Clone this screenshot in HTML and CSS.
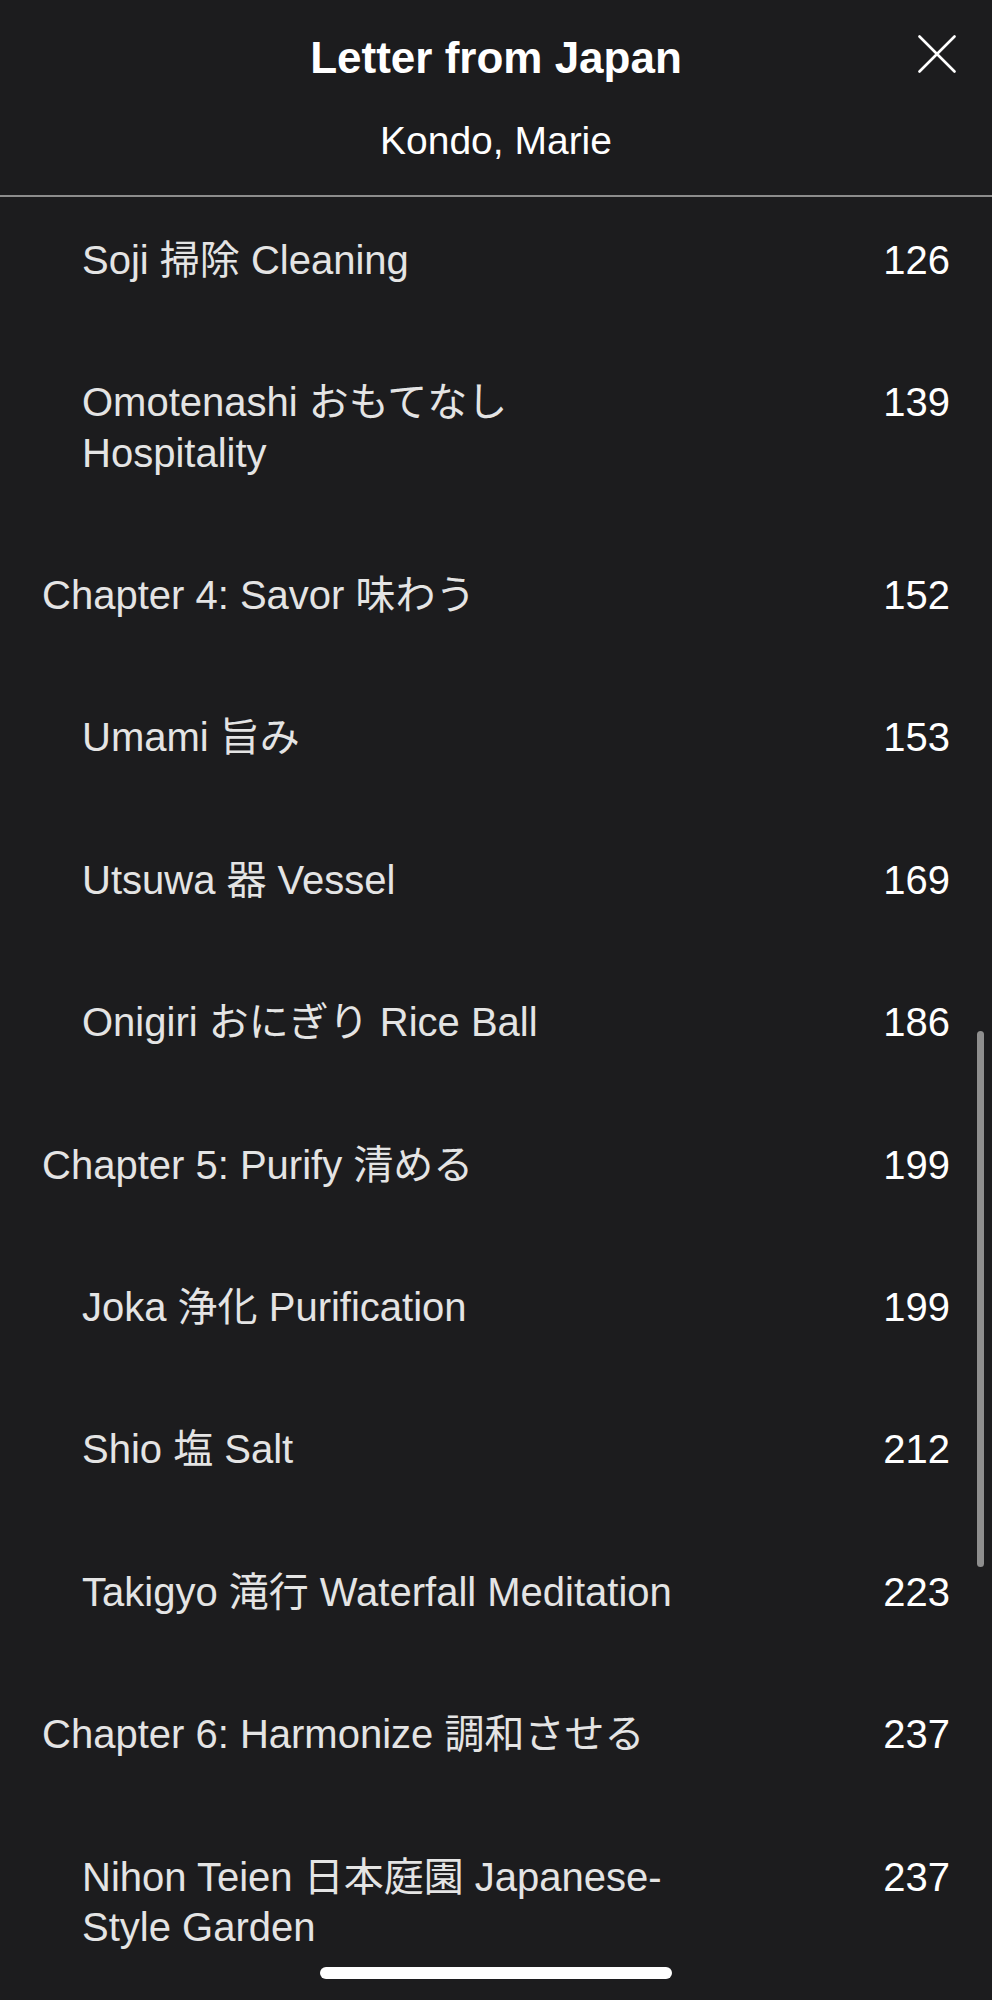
FILE: index.html
```html
<!DOCTYPE html>
<html lang="en">
<head>
<meta charset="utf-8">
<title>Letter from Japan – Contents</title>
<link rel="stylesheet" href="styles.css">
</head>
<body>
<div class="screen">
  <header class="header">
    <div class="title-row">
      <h1 class="title">Letter from Japan</h1>
      <button class="close" aria-label="Close">
        <svg viewBox="0 0 38 38" width="38" height="38"><path d="M1.5 1.5 L36.5 36.5 M36.5 1.5 L1.5 36.5" stroke="#ffffff" stroke-width="2.6" stroke-linecap="round" fill="none"/></svg>
      </button>
    </div>
    <p class="author">Kondo, Marie</p>
  </header>
  <nav class="toc">
    <ol class="toc-list">
      <li class="entry sub"><span class="label">Soji 掃除 Cleaning</span><span class="page">126</span></li>
      <li class="entry sub"><span class="label">Omotenashi おもてなし Hospitality</span><span class="page">139</span></li>
      <li class="entry"><span class="label">Chapter 4: Savor 味わう</span><span class="page">152</span></li>
      <li class="entry sub"><span class="label">Umami 旨み</span><span class="page">153</span></li>
      <li class="entry sub"><span class="label">Utsuwa 器 Vessel</span><span class="page">169</span></li>
      <li class="entry sub"><span class="label">Onigiri おにぎり Rice Ball</span><span class="page">186</span></li>
      <li class="entry"><span class="label">Chapter 5: Purify 清める</span><span class="page">199</span></li>
      <li class="entry sub"><span class="label">Joka 浄化 Purification</span><span class="page">199</span></li>
      <li class="entry sub"><span class="label">Shio 塩 Salt</span><span class="page">212</span></li>
      <li class="entry sub"><span class="label">Takigyo 滝行 Waterfall Meditation</span><span class="page">223</span></li>
      <li class="entry"><span class="label">Chapter 6: Harmonize 調和させる</span><span class="page">237</span></li>
      <li class="entry sub"><span class="label">Nihon Teien 日本庭園 Japanese-Style Garden</span><span class="page">237</span></li>
    </ol>
    <div class="scrollbar"></div>
  </nav>
  <div class="home-indicator"></div>
</div>
</body>
</html>
```
FILE: styles.css
```css
html, body {
  margin: 0;
  padding: 0;
  background: #1c1c1e;
}

.screen {
  position: relative;
  width: 992px;
  height: 2000px;
  overflow: hidden;
  background: #1c1c1e;
  font-family: "Liberation Sans", "Noto Sans CJK JP", sans-serif;
  color: #ffffff;
}

.header {
  padding: 30px 0 29px;
  border-bottom: 2px solid #8c8c8c;
}

.title-row {
  display: grid;
  grid-template-columns: 1fr auto 1fr;
  align-items: start;
}

.title {
  grid-column: 2;
  margin: 0;
  font-size: 44px;
  line-height: 56px;
  font-weight: 700;
  color: #ffffff;
  white-space: nowrap;
}

.close {
  grid-column: 3;
  justify-self: end;
  margin: 5px 36px 0 0;
  padding: 0;
  width: 38px;
  height: 38px;
  border: 0;
  background: none;
  display: block;
}

.close svg {
  display: block;
}

.author {
  margin: 30px 0 0;
  text-align: center;
  font-size: 39px;
  line-height: 50px;
  color: #ffffff;
}

.toc {
  position: relative;
  height: 1803px;
  overflow: hidden;
}

.toc-list {
  list-style: none;
  margin: -8px 0 0;
  padding: 0;
}

.entry {
  display: flex;
  align-items: flex-start;
  padding: 46.1px 42px 46.1px 42px;
  font-size: 40px;
  line-height: 50.2px;
}

.entry.sub {
  padding-left: 82px;
}

.label {
  flex: 1;
  color: #e4e4e4;
}

.page {
  flex-shrink: 0;
  width: 260px;
  text-align: right;
  color: #ffffff;
}

.scrollbar {
  position: absolute;
  top: 834px;
  right: 8px;
  width: 7px;
  height: 536px;
  border-radius: 4px;
  background: #8e8e8e;
}

.home-indicator {
  position: absolute;
  left: 320px;
  top: 1967px;
  width: 352px;
  height: 12px;
  border-radius: 6px;
  background: #ffffff;
}
```
